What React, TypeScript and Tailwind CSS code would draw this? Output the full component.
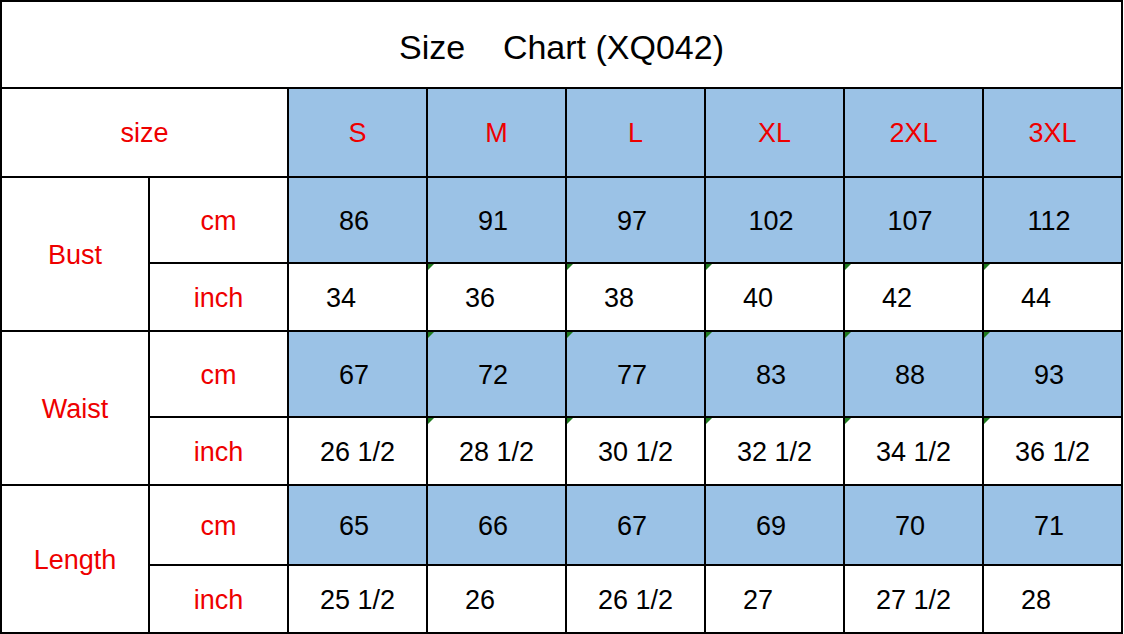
const sizes = ["S", "M", "L", "XL", "2XL", "3XL"];

type Row = { unit: "cm" | "inch"; row: string; values: string[]; marks?: boolean };

const groups: { name: string; start: string; rows: Row[] }[] = [
  {
    name: "Bust",
    start: "row-start-3",
    rows: [
      { unit: "cm", row: "row-start-3", values: ["86", "91", "97", "102", "107", "112"] },
      { unit: "inch", row: "row-start-4", values: ["34", "36", "38", "40", "42", "44"], marks: true },
    ],
  },
  {
    name: "Waist",
    start: "row-start-5",
    rows: [
      { unit: "cm", row: "row-start-5", values: ["67", "72", "77", "83", "88", "93"], marks: true },
      { unit: "inch", row: "row-start-6", values: ["26 1/2", "28 1/2", "30 1/2", "32 1/2", "34 1/2", "36 1/2"], marks: true },
    ],
  },
  {
    name: "Length",
    start: "row-start-7",
    rows: [
      { unit: "cm", row: "row-start-7", values: ["65", "66", "67", "69", "70", "71"] },
      { unit: "inch", row: "row-start-8", values: ["25 1/2", "26", "26 1/2", "27", "27 1/2", "28"] },
    ],
  },
];

// little green error flag in the corner of a cell
function Marker() {
  return (
    <span className="absolute top-0 left-0 w-0 h-0 border-t-[6px] border-r-[6px] border-t-[#1f7a1f] border-r-transparent" />
  );
}

export default function App() {
  return (
    <div className="w-[1124px] h-[634px] bg-white font-['Liberation_Sans',Arial,sans-serif]">
      <div className="w-[1123px] grid grid-cols-[146px_137px_137px_137px_137px_137px_137px_137px] grid-rows-[85px_87px_84px_66px_84px_66px_78px_66px] gap-[2px] p-[2px] bg-black">
        {/* Title */}
        <div className="col-span-8 bg-white flex items-center justify-center pt-[4px] text-[34px] leading-none text-black whitespace-pre">
          {"Size    Chart (XQ042)"}
        </div>

        {/* Header row */}
        <div className="col-span-2 bg-white flex items-center justify-center pt-[2px] text-[27px] leading-none text-[#ee0000]">
          size
        </div>
        {sizes.map((s) => (
          <div key={s} className="bg-[#9bc2e6] flex items-center justify-center pt-[2px] text-[27px] leading-none text-[#ee0000]">
            {s}
          </div>
        ))}

        {groups.map((g) => (
          <div key={g.name} className="contents">
            <div
              className={
                "col-start-1 row-span-2 bg-white flex items-center justify-center pt-[2px] text-[27px] leading-none text-[#ee0000] " +
                g.start
              }
            >
              {g.name}
            </div>
            {g.rows.map((r) => (
              <div key={r.unit} className="contents">
                <div
                  className={
                    "col-start-2 bg-white flex items-center justify-center pt-[2px] text-[27px] leading-none text-[#ee0000] " +
                    r.row
                  }
                >
                  {r.unit}
                </div>
                {r.values.map((v, vi) => {
                  const blue = r.unit === "cm";
                  const leftAligned = r.unit === "inch" && !v.includes("/");
                  return (
                    <div
                      key={vi}
                      className={
                        "relative flex items-center pt-[2px] text-[27px] leading-none text-black " +
                        r.row +
                        (blue ? " bg-[#9bc2e6] " : " bg-white ") +
                        (leftAligned ? "justify-start pl-[37px]" : blue ? "justify-center pr-[7px]" : "justify-center")
                      }
                    >
                      {r.marks && vi > 0 && <Marker />}
                      {v}
                    </div>
                  );
                })}
              </div>
            ))}
          </div>
        ))}
      </div>
    </div>
  );
}
